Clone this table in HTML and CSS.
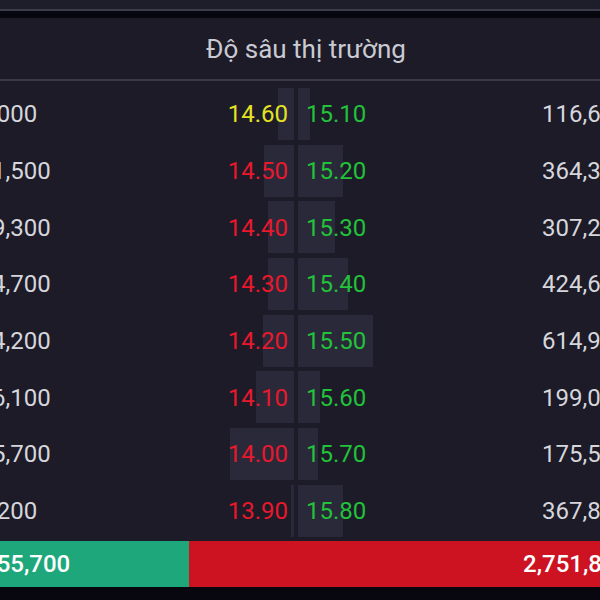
FILE: index.html
```html
<!DOCTYPE html>
<html lang="vi">
<head>
<meta charset="utf-8">
<title>Độ sâu thị trường</title>
<link rel="stylesheet" href="styles.css">
</head>
<body>
<div class="topbar"></div>
<div class="sep"></div>
<section class="depth">
  <header class="depth-head"><h2 class="title">Độ sâu thị trường</h2></header>
  <div class="rows">
    <div class="row">
      <div class="bid"><span class="bar" style="width:16px"></span><span class="vol">59,000</span><span class="price ref">14.60</span></div>
      <div class="ask"><span class="bar" style="width:12px"></span><span class="price up">15.10</span><span class="vol">116,600</span></div>
    </div>
    <div class="row">
      <div class="bid"><span class="bar" style="width:30px"></span><span class="vol">181,500</span><span class="price down">14.50</span></div>
      <div class="ask"><span class="bar" style="width:45px"></span><span class="price up">15.20</span><span class="vol">364,300</span></div>
    </div>
    <div class="row">
      <div class="bid"><span class="bar" style="width:26px"></span><span class="vol">159,300</span><span class="price down">14.40</span></div>
      <div class="ask"><span class="bar" style="width:37px"></span><span class="price up">15.30</span><span class="vol">307,200</span></div>
    </div>
    <div class="row">
      <div class="bid"><span class="bar" style="width:26px"></span><span class="vol">154,700</span><span class="price down">14.30</span></div>
      <div class="ask"><span class="bar" style="width:50px"></span><span class="price up">15.40</span><span class="vol">424,600</span></div>
    </div>
    <div class="row">
      <div class="bid"><span class="bar" style="width:31px"></span><span class="vol">184,200</span><span class="price down">14.20</span></div>
      <div class="ask"><span class="bar" style="width:75px"></span><span class="price up">15.50</span><span class="vol">614,900</span></div>
    </div>
    <div class="row">
      <div class="bid"><span class="bar" style="width:38px"></span><span class="vol">216,100</span><span class="price down">14.10</span></div>
      <div class="ask"><span class="bar" style="width:22px"></span><span class="price up">15.60</span><span class="vol">199,000</span></div>
    </div>
    <div class="row">
      <div class="bid"><span class="bar" style="width:64px"></span><span class="vol">365,700</span><span class="price down">14.00</span></div>
      <div class="ask"><span class="bar" style="width:20px"></span><span class="price up">15.70</span><span class="vol">175,500</span></div>
    </div>
    <div class="row">
      <div class="bid"><span class="bar" style="width:3px"></span><span class="vol">17,200</span><span class="price down">13.90</span></div>
      <div class="ask"><span class="bar" style="width:45px"></span><span class="price up">15.80</span><span class="vol">367,800</span></div>
    </div>
  </div>
  <div class="totals">
    <div class="tot tot-bid"><span class="tot-val">1,355,700</span></div>
    <div class="tot tot-ask"><span class="tot-val">2,751,800</span></div>
  </div>
</section>
</body>
</html>
```
FILE: styles.css
```css
html, body {
  margin: 0;
  overflow: hidden;
  background: #08070f;
}
body {
  width: 600px;
  height: 600px;
  font-family: Roboto, "Noto Sans", sans-serif;
}
.topbar {
  height: 9px;
  background: #1e1d2a;
  border-bottom: 2px solid #3c3b4a;
}
.sep {
  height: 7px;
  background: #07060f;
}
.depth {
  background: #1c1b27;
}
.depth-head {
  height: 61px;
  display: flex;
  align-items: center;
  justify-content: center;
  padding-left: 12px;
  border-bottom: 2px solid #3a3948;
}
.title {
  margin: 0;
  font-size: 26px;
  font-weight: 400;
  color: #cacad2;
}
.rows {
  padding: 5px 0 1.4px;
}
.row {
  display: grid;
  grid-template-columns: 294px 1fr;
  column-gap: 4px;
  height: 56.7px;
}
.bid, .ask {
  position: relative;
  display: flex;
  align-items: center;
  white-space: nowrap;
}
.bar {
  position: absolute;
  top: 2px;
  bottom: 2.7px;
  background: #2a2939;
}
.bid .bar { right: 0; }
.ask .bar { left: 0; }
.price, .vol {
  position: relative;
  font-size: 24px;
}
.vol { color: #d6d6dd; }
.bid {
  justify-content: space-between;
  padding-right: 6px;
}
.bid .vol { margin-left: -35px; }
.ask {
  display: grid;
  grid-template-columns: 244px auto;
  align-items: center;
}
.ask .price { padding-left: 8px; }
.ref { color: #e3e324; }
.down { color: #e8182d; }
.up { color: #22c23b; }
.totals {
  display: flex;
  height: 46px;
}
.tot {
  display: flex;
  align-items: center;
  white-space: nowrap;
  color: #ffffff;
  font-size: 24px;
  font-weight: 500;
}
.tot-bid {
  flex: none;
  width: 189px;
  background: #1ea77b;
}
.tot-bid .tot-val { margin-left: -36px; }
.tot-ask {
  flex: 1;
  min-width: 0;
  background: #cd1221;
  padding-left: 334px;
}
```
